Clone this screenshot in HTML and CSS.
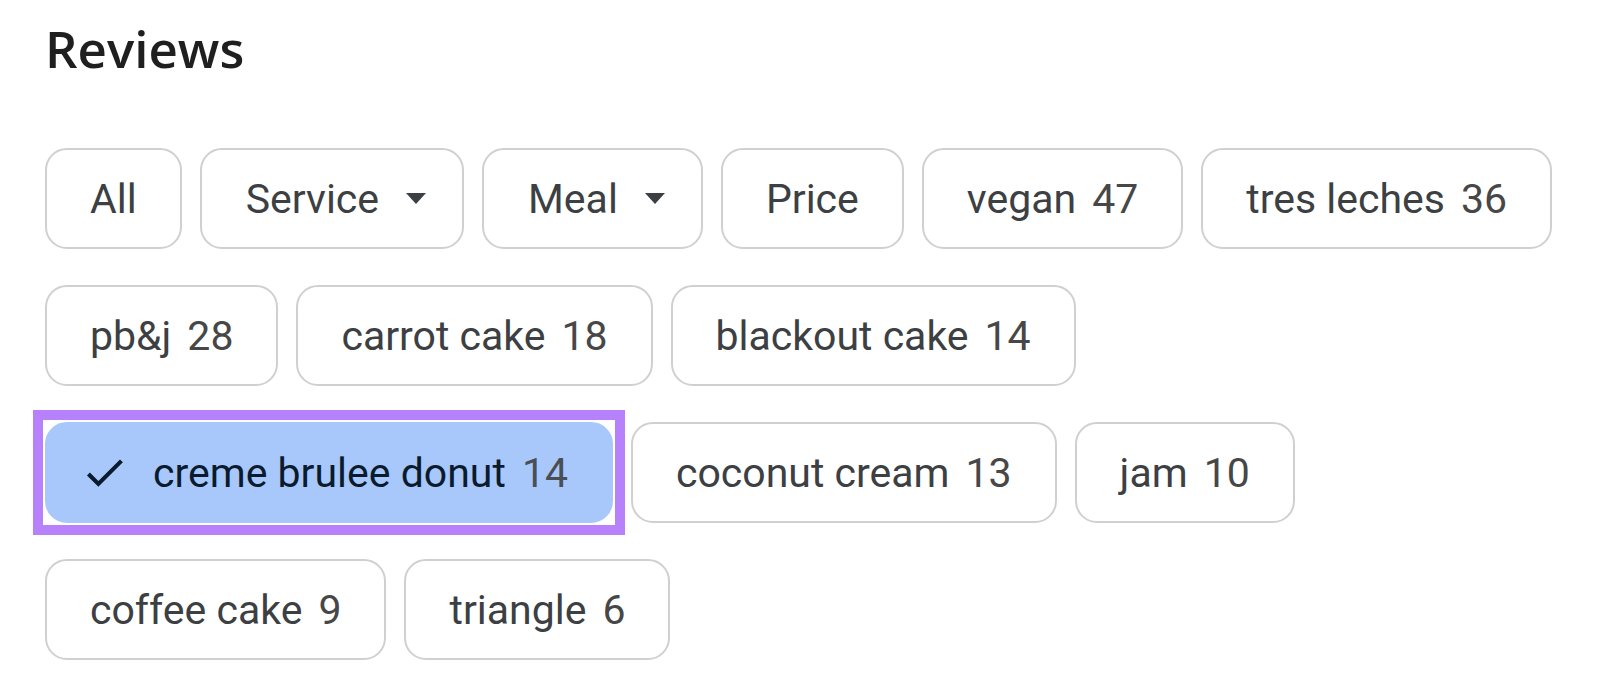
FILE: index.html
```html
<!DOCTYPE html>
<html lang="en">
<head>
<meta charset="utf-8">
<title>Reviews</title>
<link rel="stylesheet" href="styles.css">
</head>
<body>
<section class="reviews">
  <h1 class="title">Reviews</h1>
  <div class="chips">
    <div class="chip-row">
      <span class="chip">All</span>
      <span class="chip chip-menu">Service<span class="caret"></span></span>
      <span class="chip chip-menu">Meal<span class="caret"></span></span>
      <span class="chip">Price</span>
      <span class="chip">vegan<span class="count">47</span></span>
      <span class="chip">tres leches<span class="count">36</span></span>
    </div>
    <div class="chip-row">
      <span class="chip">pb&amp;j<span class="count">28</span></span>
      <span class="chip">carrot cake<span class="count">18</span></span>
      <span class="chip">blackout cake<span class="count">14</span></span>
    </div>
    <div class="chip-row">
      <span class="chip chip-selected highlighted">
        <svg class="check" viewBox="0 0 24 24" aria-hidden="true"><path d="M9 16.17L4.83 12l-1.42 1.41L9 19 21 7l-1.41-1.41z"/></svg>creme brulee donut<span class="count">14</span>
      </span>
      <span class="chip">coconut cream<span class="count">13</span></span>
      <span class="chip">jam<span class="count">10</span></span>
    </div>
    <div class="chip-row">
      <span class="chip">coffee cake<span class="count">9</span></span>
      <span class="chip">triangle<span class="count">6</span></span>
    </div>
  </div>
</section>
</body>
</html>
```

FILE: styles.css
```css
html, body {
  margin: 0;
  padding: 0;
  background: #ffffff;
}

.reviews {
  padding: 0 0 0 45px;
  font-family: Roboto, "Liberation Sans", sans-serif;
}

.title {
  margin: 0;
  padding-top: 15px;
  height: 130px;
  box-sizing: border-box;
  font-family: "Open Sans", Roboto, sans-serif;
  font-weight: 600;
  font-size: 51px;
  line-height: 66px;
  color: #1f1f1f;
}

.chips {
  display: flex;
  flex-direction: column;
  row-gap: 36px;
  padding-top: 18px;
}

.chip-row {
  display: flex;
  column-gap: 18px;
}

.chip {
  display: inline-flex;
  align-items: center;
  height: 101px;
  box-sizing: border-box;
  padding: 0 43px;
  border: 2px solid #d0d0d0;
  border-radius: 22px;
  font-size: 41px;
  color: #3c4043;
  white-space: nowrap;
  background: #ffffff;
}

.chip-menu {
  padding-left: 44px;
  padding-right: 36px;
}

.caret {
  width: 0;
  height: 0;
  margin-left: 27px;
  border-left: 10.5px solid transparent;
  border-right: 10.5px solid transparent;
  border-top: 11px solid #3c4043;
}

.count {
  margin-left: 16px;
  color: #474747;
}

.chip-selected {
  position: relative;
  padding-left: 33px;
  background: #a8c8fb;
  border-color: #a8c8fb;
  color: #0a1b2e;
}

.chip-selected .count {
  color: #4a4f55;
}

.check {
  width: 49px;
  height: 49px;
  margin-right: 24px;
  fill: #0a1b2e;
}

.highlighted::after {
  content: "";
  position: absolute;
  left: -14px;
  right: -14px;
  top: -14px;
  bottom: -14px;
  border: 10px solid #b781fc;
  pointer-events: none;
}
```
